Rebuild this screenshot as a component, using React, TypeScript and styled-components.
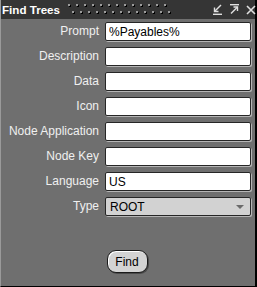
import React from 'react';
import styled, { createGlobalStyle } from 'styled-components';

const GlobalStyle = createGlobalStyle`
	html, body {
		margin: 0;
		padding: 0;
		background: #6f6f6f;
	}
	* {
		box-sizing: border-box;
	}
`

const Window = styled.div`
	width: 257px;
	height: 287px;
	display: flex;
	flex-direction: column;
	background: #6f6f6f;
	border-left: 1px solid #9a9a9a;
	border-right: 2px solid #000;
	border-bottom: 1px solid #000;
	font-family: "Liberation Sans", Arial, sans-serif;
`

const TitleBar = styled.div`
	height: 19px;
	display: flex;
	align-items: center;
	background: #353535;
	padding: 0 4px 0 1px;
	gap: 8px;
`

const Title = styled.div`
	color: #fff;
	font-weight: bold;
	font-size: 11.6px;
	white-space: nowrap;
`

const Grip = styled.div`
	flex: 1;
	height: 14px;
	align-self: flex-start;
	margin-top: 3px;
	margin-right: 30px;
`

const TitleIcons = styled.div`
	display: flex;
	align-items: center;
	gap: 6px;
`

const Body = styled.div`
	flex: 1;
	display: flex;
	flex-direction: column;
	padding-top: 3px;
`

const FormGrid = styled.div`
	display: grid;
	grid-template-columns: 97px 146px;
	column-gap: 6px;
	row-gap: 6px;
	padding-left: 1px;
`

const Label = styled.label`
	color: #f0f0f0;
	font-size: 12px;
	text-align: right;
	line-height: 19px;
	white-space: nowrap;
`

const TextInput = styled.input`
	height: 19px;
	width: 146px;
	border: 1px solid #262626;
	border-radius: 2px;
	box-shadow: 1px 1px 0 #b5b5b5;
	background: #fff;
	padding: 0 3px;
	font-family: "Liberation Sans", Arial, sans-serif;
	font-size: 12px;
	color: #000;
	outline: none;
`

const SelectBox = styled.div`
	height: 19px;
	width: 146px;
	border: 1px solid #262626;
	border-radius: 2px;
	box-shadow: 1px 1px 0 #b5b5b5;
	background: #d2d2d2;
	display: flex;
	align-items: center;
	justify-content: space-between;
	padding: 0 6px 0 4px;
	font-size: 12px;
	color: #000;
`

const Caret = styled.div`
	width: 0;
	height: 0;
	border-left: 4px solid transparent;
	border-right: 4px solid transparent;
	border-top: 4px solid #6a6a6a;
`

const ButtonRow = styled.div`
	display: flex;
	justify-content: center;
	margin-top: 34px;
	padding-right: 2px;
`

const FindButton = styled.button`
	width: 41px;
	height: 23px;
	border-radius: 9px;
	border: 1px solid #1a1a1a;
	background: #d3d3d3;
	box-shadow: inset 1px 1px 0 #fff, 1px 1px 0 #4a4a4a;
	font-family: "Liberation Sans", Arial, sans-serif;
	font-size: 12px;
	color: #000;
	padding: 0;
	cursor: pointer;
`

const fields = [
	{ id: "prompt", label: "Prompt", value: "%Payables%" },
	{ id: "description", label: "Description", value: "" },
	{ id: "data", label: "Data", value: "" },
	{ id: "icon", label: "Icon", value: "" },
	{ id: "nodeApplication", label: "Node Application", value: "" },
	{ id: "nodeKey", label: "Node Key", value: "" },
	{ id: "language", label: "Language", value: "US" },
]

// One bevelled dot of the drag handle
const Dot = ({ x, y }: { x: number; y: number }) => (
	<g>
		<rect x={x + 1} y={y + 1} width={2} height={2} fill="#000" />
		<rect x={x} y={y} width={2} height={2} fill="#9c9c9c" />
	</g>
)

// Dotted drag handle of the title bar
const GripDots = () => {
	const dots = [];
	for (let i = 0; i < 13; i++) {
		dots.push(<Dot key={"a" + i} x={i * 8} y={1} />);
		dots.push(<Dot key={"b" + i} x={i * 8 + 4} y={8} />);
	}
	return <svg width="106" height="14" shapeRendering="crispEdges">{dots}</svg>
}

const App: React.FC = () => {
	return (
		<>
			<GlobalStyle />
			<Window>
				<TitleBar>
					<Title>Find Trees</Title>
					<Grip><GripDots /></Grip>
					<TitleIcons>
						<svg width="11" height="11" viewBox="0 0 11 11" stroke="#e0e0e0" strokeWidth="1.4" fill="none">
							<path d="M9 1 L2.5 7.5" />
							<path d="M2.5 3.5 V7.5 H6.5" />
							<path d="M1 10.3 H10" />
						</svg>
						<svg width="11" height="11" viewBox="0 0 11 11" stroke="#e0e0e0" strokeWidth="1.4" fill="none">
							<path d="M1 0.7 H10" />
							<path d="M2 9.5 L8.5 3" />
							<path d="M4.5 3 H8.5 V7" />
						</svg>
						<svg width="10" height="10" viewBox="0 0 10 10" stroke="#e0e0e0" strokeWidth="1.6" fill="none">
							<path d="M1 1 L9 9 M9 1 L1 9" />
						</svg>
					</TitleIcons>
				</TitleBar>
				<Body>
					<FormGrid>
						{fields.map((f) => (
							<React.Fragment key={f.id}>
								<Label htmlFor={f.id}>{f.label}</Label>
								<TextInput id={f.id} type="text" defaultValue={f.value} />
							</React.Fragment>
						))}
						<Label>Type</Label>
						<SelectBox>
							<span>ROOT</span>
							<Caret />
						</SelectBox>
					</FormGrid>
					<ButtonRow>
						<FindButton>Find</FindButton>
					</ButtonRow>
				</Body>
			</Window>
		</>
	)
}

export default App
